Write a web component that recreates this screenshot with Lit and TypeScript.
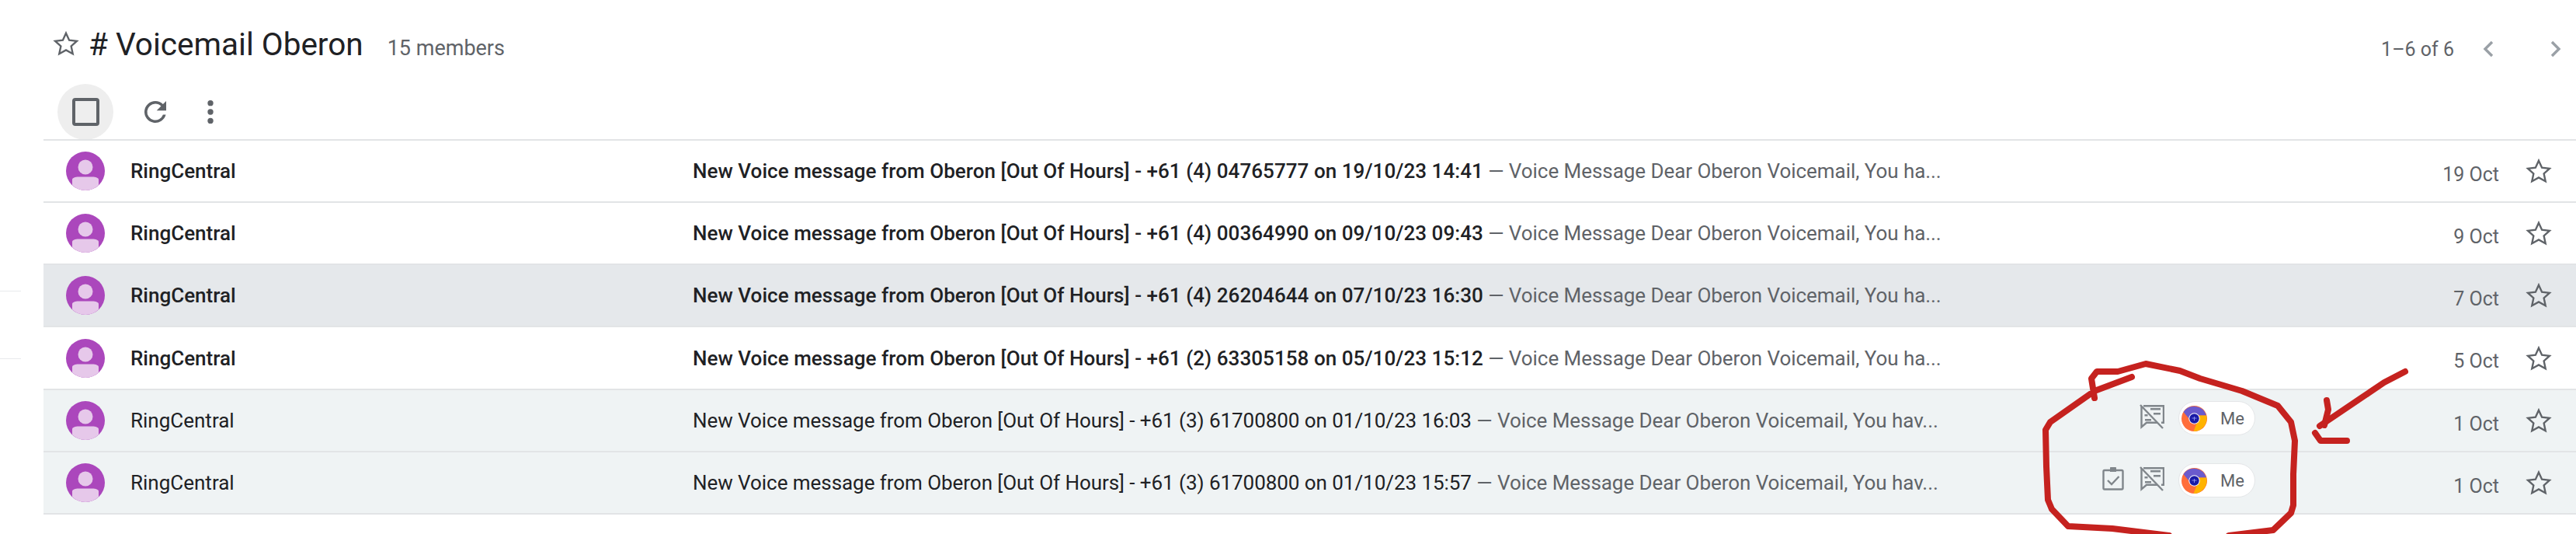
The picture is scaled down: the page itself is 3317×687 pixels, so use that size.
import { LitElement, html, css, svg } from "lit";
import { customElement } from "lit/decorators.js";

const rows = [
  { no: "+61 (4) 04765777", at: "19/10/23 14:41", date: "19 Oct", kind: "unread", tail: "ha..." },
  { no: "+61 (4) 00364990", at: "09/10/23 09:43", date: "9 Oct", kind: "unread", tail: "ha..." },
  { no: "+61 (4) 26204644", at: "07/10/23 16:30", date: "7 Oct", kind: "unread hover", tail: "ha..." },
  { no: "+61 (2) 63305158", at: "05/10/23 15:12", date: "5 Oct", kind: "unread tall", tail: "ha..." },
  { no: "+61 (3) 61700800", at: "01/10/23 16:03", date: "1 Oct", kind: "read", tail: "hav...", me: true },
  { no: "+61 (3) 61700800", at: "01/10/23 15:57", date: "1 Oct", kind: "read", tail: "hav...", me: true, task: true },
];

const star = html`<svg class="star" viewBox="0 0 24 24"><path fill="none" stroke="currentColor" stroke-width="1.5" d="M12 3.6l2.6 5.7 6.2.7-4.6 4.2 1.3 6.2L12 17.3l-5.5 3.1 1.3-6.2L3.2 10l6.2-.7z"/></svg>`;

const avatar = html`<svg class="avatar" viewBox="0 0 50 50"><circle cx="25" cy="25" r="25" fill="#ab47bc"/><circle cx="25" cy="20" r="9.5" fill="#e6c8ea"/><path fill="#e6c8ea" d="M8 36c0-2 4-3.500 8-3.500h18c4 0 8 1.500 8 3.500v7.300a25 25 0 0 1-34 0z"/></svg>`;

const noChat = html`<svg class="ico" viewBox="0 0 32 32"><g fill="none" stroke="#80868b" stroke-width="2.4"><path d="M5 2.200h26v21.600h-3M23 23.800H9l-6.500 5.500V3"/><path d="M1 1l29 30"/></g><path fill="#80868b" d="M14 5h13v2.400H14zM18 11h9v2.400h-9zM6.500 13h4v2.400h-4zM7 19h8v2.400H7z"/></svg>`;

const task = html`<svg class="ico task" viewBox="0 0 28 30"><g fill="none" stroke="#80868b" stroke-width="2.400"><rect x="1.500" y="4" width="25" height="24.500" rx="1.500"/><path d="M7 17l5 5 9.500-10"/></g><path fill="#80868b" d="M10 1.500a4 3 0 0 1 8 0V6h-8z"/></svg>`;

const chrome = html`<svg class="chrome" viewBox="0 0 33 33">
  <circle cx="16.500" cy="16.500" r="16.500" fill="#ff6d3a"/>
  <path fill="#6a5acd" d="M2.500 8A16.500 16.500 0 0 1 32 12.500H16.500L10 17z"/>
  <path fill="#ffb300" d="M32 12.500A16.500 16.500 0 0 1 15.500 33L21 19l-2-6.500z"/>
  <circle cx="16.500" cy="16.500" r="7.200" fill="#fff"/><circle cx="16.500" cy="16.500" r="6.200" fill="#1a1aa6"/>
  <path fill="none" stroke="#9fa8ff" stroke-width=".8" d="M13.500 16h6M16.500 14v5"/>
</svg>`;

const marks = svg`
  <path d="M2745 485 L2697 503 L2640 543 L2634 553 L2635 600 L2637 643 L2642 655 L2663 677 L2720 680 L2793 689 M2870 689 L2927 682 L2950 660 L2953 650 L2953 610 L2955 567 L2950 543 L2933 522 L2887 503 L2833 487 L2807 477 L2763 468 L2727 478 L2700 478 L2693 487 L2697 512"/>
  <path d="M3097 478 L3070 492 L2987 548"/>
  <path d="M2996 515 L2998 527 L2993 547"/>
  <path d="M2981 557 L2988 567 L3022 567"/>
`;

@customElement("app-root")
export class AppRoot extends LitElement {
  static styles = css`
    :host { display: block; width: 3317px; height: 687px; position: relative; overflow: hidden; background: #fff; font-family: Roboto, "Noto Sans", sans-serif; color: #202124; }
    .stubs { position: absolute; left: 0; top: 374px; width: 27px; height: 88px; border-top: 1px solid #e8eaed; border-bottom: 1px solid #e8eaed; box-sizing: border-box; }
    .main { margin-left: 56px; }
    .head { height: 109px; display: flex; align-items: baseline; padding: 34px 0 0 10px; box-sizing: border-box; }
    .head .star { width: 38px; height: 38px; color: #5f6368; margin-right: 10px; align-self: flex-start; margin-top: 3px; }
    .title { font-size: 40.5px; line-height: 46px; }
    .members { font-size: 27px; color: #5f6368; margin-left: 31px; }
    .pager { margin-left: auto; align-self: flex-start; margin-top: 6px; height: 46px; display: flex; align-items: center; font-size: 25px; color: #5f6368; padding-right: 14px; }
    .pager svg { width: 24px; height: 24px; color: #9aa0a6; }
    .pager .prev { margin-left: 32px; margin-right: 63px; }
    .tools { height: 70px; display: flex; align-items: center; padding-left: 18px; }
    .check { width: 72px; height: 72px; border-radius: 50%; background: #eeeeee; display: flex; align-items: center; justify-content: center; }
    .box { width: 35px; height: 36px; border: 4px solid #5f6368; border-radius: 4px; box-sizing: border-box; }
    .tools svg { width: 42px; height: 42px; color: #5f6368; }
    .refresh { margin-left: 33px; }
    .more { margin-left: 29px; }
    .row { height: 80px; box-sizing: border-box; border-top: 2px solid #e2e4e6; display: flex; align-items: center; position: relative; }
    .row.tall { height: 81px; }
    .row:last-child { border-bottom: 2px solid #e2e4e6; height: 82px; }
    .row.hover { background: #e5e8eb; }
    .row.read { background: #eff3f4; }
    .avatar { width: 50px; height: 50px; margin-left: 29px; flex: none; }
    .name { margin-left: 33px; width: 724px; flex: none; font-size: 26px; }
    .subj { flex: none; width: 1630px; white-space: nowrap; font-size: 26px; letter-spacing: -0.05px; }
    .unread .name, .unread .s { font-weight: 500; }
    .unread .s { letter-spacing: 0.05px; }
    .unread .p { letter-spacing: -0.05px; }
    .p { color: #5f6368; }
    .extras { position: absolute; right: 413px; top: 0; bottom: 6px; display: flex; align-items: center; }
    .ico { width: 32px; height: 32px; margin-right: 18px; margin-top: -4px; }
    .ico.task { width: 28px; height: 30px; margin-right: 20px; }
    .chip { width: 99px; height: 44px; box-sizing: border-box; border: 1px solid #e4e6e8; border-radius: 22px; background: #fff; display: flex; align-items: center; padding-left: 3px; font-size: 22px; color: #5f6368; }
    .chrome { width: 33px; height: 33px; margin-right: 17px; flex: none; }
    .date { position: absolute; right: 99px; top: 8px; bottom: 0; display: flex; align-items: center; font-size: 25px; color: #5f6368; white-space: nowrap; font-weight: 400; }
    .row .star { position: absolute; right: 29px; width: 38px; height: 38px; color: #5f6368; }
    .ink { position: absolute; left: 0; top: 0; width: 3317px; height: 687px; pointer-events: none; }
    .ink path { fill: none; stroke: #c5221f; stroke-width: 8; stroke-linecap: round; stroke-linejoin: round; }
  `;

  render() {
    return html`
      <div class="stubs"></div>
      <div class="main">
        <div class="head">
          ${star}
          <div class="title"># Voicemail Oberon</div>
          <div class="members">15 members</div>
          <div class="pager">
            <span>1–6 of 6</span>
            <svg class="prev" viewBox="0 0 24 24"><path fill="none" stroke="currentColor" stroke-width="3.400" d="M17 3l-9 9 9 9"/></svg>
            <svg viewBox="0 0 24 24"><path fill="none" stroke="currentColor" stroke-width="3.400" d="M7 3l9 9-9 9"/></svg>
          </div>
        </div>
        <div class="tools">
          <div class="check"><div class="box"></div></div>
          <svg class="refresh" viewBox="0 0 24 24"><path fill="currentColor" d="M17.650 6.350A7.960 7.960 0 0 0 12 4a8 8 0 1 0 7.730 10h-2.080A6 6 0 1 1 12 6c1.660 0 3.140.69 4.220 1.780L13 11h7V4z"/></svg>
          <svg class="more" viewBox="0 0 24 24"><circle cx="12" cy="5.500" r="2.100" fill="currentColor"/><circle cx="12" cy="12" r="2.100" fill="currentColor"/><circle cx="12" cy="18.500" r="2.100" fill="currentColor"/></svg>
        </div>
        ${rows.map(r => html`
          <div class="row ${r.kind}">
            ${avatar}
            <div class="name">RingCentral</div>
            <div class="subj"><span class="s">New Voice message from Oberon [Out Of Hours] - ${r.no} on ${r.at}</span><span class="p"> — Voice Message Dear Oberon Voicemail, You ${r.tail}</span></div>
            ${r.me ? html`<div class="extras">${r.task ? task : ""}${noChat}<div class="chip">${chrome}Me</div></div>` : ""}
            <div class="date">${r.date}</div>
            ${star}
          </div>`)}
      </div>
      <svg class="ink" viewBox="0 0 3317 687">${marks}</svg>
    `;
  }
}
